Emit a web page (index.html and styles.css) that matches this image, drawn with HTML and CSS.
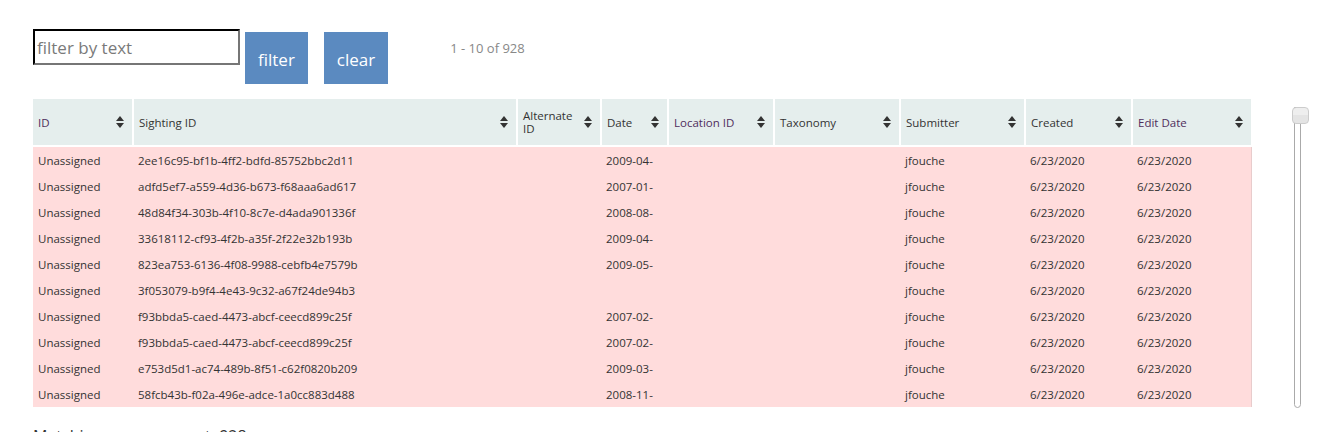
FILE: index.html
```html
<!DOCTYPE html>
<html lang="en">

<head>
  <meta charset="UTF-8" />
  <title>Sightings</title>
  <link rel="stylesheet" href="styles.css">
</head>

<body>

  <div class="page">

    <!-- barra de filtro -->
    <div class="toolbar">
      <input type="text" class="filtro" placeholder="filter by text">
      <button class="btn">filter</button>
      <button class="btn btn-clear">clear</button>
      <span class="pager">1 - 10 of 928</span>
    </div>

    <div class="grid-area">
      <table class="tabela">
        <colgroup>
          <col style="width: 100px">
          <col style="width: 384px">
          <col style="width: 84px">
          <col style="width: 67px">
          <col style="width: 106px">
          <col style="width: 126px">
          <col style="width: 125px">
          <col style="width: 107px">
          <col style="width: 119px">
        </colgroup>
        <thead>
          <tr>
            <th><div class="th"><span class="link">ID</span><i class="sort"></i></div></th>
            <th><div class="th"><span>Sighting ID</span><i class="sort"></i></div></th>
            <th><div class="th"><span>Alternate ID</span><i class="sort"></i></div></th>
            <th><div class="th"><span>Date</span><i class="sort"></i></div></th>
            <th><div class="th"><span class="link">Location ID</span><i class="sort"></i></div></th>
            <th><div class="th"><span>Taxonomy</span><i class="sort"></i></div></th>
            <th><div class="th"><span>Submitter</span><i class="sort"></i></div></th>
            <th><div class="th"><span>Created</span><i class="sort"></i></div></th>
            <th><div class="th"><span class="link">Edit Date</span><i class="sort"></i></div></th>
          </tr>
        </thead>
        <tbody>
          <tr><td>Unassigned</td><td>2ee16c95-bf1b-4ff2-bdfd-85752bbc2d11</td><td></td><td>2009-04-</td><td></td><td></td><td>jfouche</td><td>6/23/2020</td><td>6/23/2020</td></tr>
          <tr><td>Unassigned</td><td>adfd5ef7-a559-4d36-b673-f68aaa6ad617</td><td></td><td>2007-01-</td><td></td><td></td><td>jfouche</td><td>6/23/2020</td><td>6/23/2020</td></tr>
          <tr><td>Unassigned</td><td>48d84f34-303b-4f10-8c7e-d4ada901336f</td><td></td><td>2008-08-</td><td></td><td></td><td>jfouche</td><td>6/23/2020</td><td>6/23/2020</td></tr>
          <tr><td>Unassigned</td><td>33618112-cf93-4f2b-a35f-2f22e32b193b</td><td></td><td>2009-04-</td><td></td><td></td><td>jfouche</td><td>6/23/2020</td><td>6/23/2020</td></tr>
          <tr><td>Unassigned</td><td>823ea753-6136-4f08-9988-cebfb4e7579b</td><td></td><td>2009-05-</td><td></td><td></td><td>jfouche</td><td>6/23/2020</td><td>6/23/2020</td></tr>
          <tr><td>Unassigned</td><td>3f053079-b9f4-4e43-9c32-a67f24de94b3</td><td></td><td></td><td></td><td></td><td>jfouche</td><td>6/23/2020</td><td>6/23/2020</td></tr>
          <tr><td>Unassigned</td><td>f93bbda5-caed-4473-abcf-ceecd899c25f</td><td></td><td>2007-02-</td><td></td><td></td><td>jfouche</td><td>6/23/2020</td><td>6/23/2020</td></tr>
          <tr><td>Unassigned</td><td>f93bbda5-caed-4473-abcf-ceecd899c25f</td><td></td><td>2007-02-</td><td></td><td></td><td>jfouche</td><td>6/23/2020</td><td>6/23/2020</td></tr>
          <tr><td>Unassigned</td><td>e753d5d1-ac74-489b-8f51-c62f0820b209</td><td></td><td>2009-03-</td><td></td><td></td><td>jfouche</td><td>6/23/2020</td><td>6/23/2020</td></tr>
          <tr><td>Unassigned</td><td>58fcb43b-f02a-496e-adce-1a0cc883d488</td><td></td><td>2008-11-</td><td></td><td></td><td>jfouche</td><td>6/23/2020</td><td>6/23/2020</td></tr>
        </tbody>
      </table>

      <!-- slider vertical -->
      <div class="slider">
        <div class="slider-thumb"></div>
      </div>
    </div>

    <p class="total">Matching sources count: 928</p>

  </div>

</body>

</html>
```

FILE: styles.css
```css
body {
  margin: 0;
  font-family: "Open Sans", "Noto Sans", sans-serif;
  color: #333;
  background: #fff;
}

.page {
  padding: 29px 33px 0 33px;
}

.toolbar {
  display: flex;
  align-items: flex-start;
  height: 70px;
}

.filtro {
  box-sizing: border-box;
  width: 207px;
  height: 36px;
  margin: 0;
  padding: 0 2px;
  border: 2px inset #767676;
  border-top-color: #222;
  border-left-color: #222;
  font-family: inherit;
  font-size: 17px;
  color: #333;
}

.filtro::placeholder {
  color: #7a7a7a;
}

.btn {
  height: 52px;
  margin: 3px 0 0 5px;
  padding: 2px 13px 0 13px;
  border: 0;
  background: #5b8ac0;
  color: #fff;
  font-family: inherit;
  font-size: 17px;
}

.btn-clear {
  margin-left: 16px;
}

.pager {
  margin: 10px 0 0 62px;
  font-size: 13px;
  color: #888;
}

.grid-area {
  display: flex;
  align-items: flex-start;
}

.tabela {
  width: 1218px;
  table-layout: fixed;
  border-collapse: collapse;
  font-size: 11.5px;
}

.tabela thead th {
  height: 46px;
  padding: 0 0 0 5px;
  background: #e5eeed;
  border-left: 2px solid #fff;
  border-bottom: 2px solid #fff;
  font-weight: normal;
  text-align: left;
}

.tabela thead th:first-child {
  border-left: 0;
}

.th {
  display: flex;
  align-items: center;
  justify-content: space-between;
  padding-right: 8px;
  line-height: 13px;
}

.link {
  color: #4f2d5c;
}

.sort {
  flex: none;
  position: relative;
  width: 8px;
  height: 12px;
  margin-left: 4px;
}

.sort::before,
.sort::after {
  content: "";
  position: absolute;
  left: 0;
  border-left: 4px solid transparent;
  border-right: 4px solid transparent;
}

.sort::before {
  top: 0;
  border-bottom: 5px solid #333;
}

.sort::after {
  bottom: 0;
  border-top: 5px solid #333;
}

.tabela tbody td {
  height: 26px;
  padding: 0 0 0 5px;
  background: #ffdcdc;
  white-space: nowrap;
  overflow: hidden;
}

.tabela tbody td:last-child {
  border-right: 1px solid #e8cccc;
}

.slider {
  position: relative;
  box-sizing: border-box;
  width: 13px;
  height: 301px;
  margin: 8px 0 0 42px;
  border: 1px solid #aaa;
  border-radius: 0 0 6px 6px;
}

.slider-thumb {
  position: absolute;
  top: -1px;
  left: -3px;
  box-sizing: border-box;
  width: 17px;
  height: 17px;
  border: 1px solid #ccc;
  border-radius: 4px;
  background: linear-gradient(#eee 50%, #e4e4e4 50%);
}

.total {
  margin: 17px 0 0 0;
  font-size: 16px;
}
```
